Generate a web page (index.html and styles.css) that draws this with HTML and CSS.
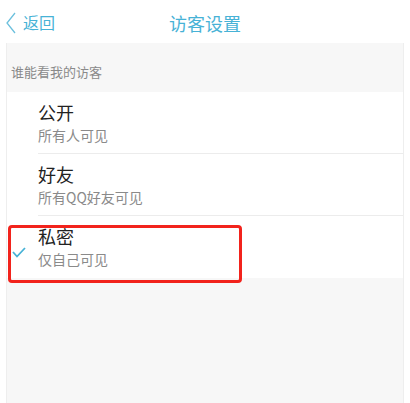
FILE: index.html
```html
<!DOCTYPE html>
<html lang="zh-CN">

<head>
    <meta charset="UTF-8">
    <meta name="viewport" content="width=device-width, initial-scale=1.0">
    <title>访客设置</title>
    <link rel="stylesheet" href="styles.css">
</head>

<body>
    <div class="header">
        <div class="back">
            <svg class="chevron" width="12" height="22" viewBox="0 0 12 22">
                <polyline points="10,1 2,11 10,21" fill="none" stroke="#6cc0dd" stroke-width="1.3" />
            </svg>
            <span>返回</span>
        </div>
        <h1 class="title">访客设置</h1>
    </div>

    <div class="page">
        <div class="section-title">谁能看我的访客</div>
        <div class="list">
            <div class="item">
                <div class="check"></div>
                <div class="text">
                    <div class="name">公开</div>
                    <div class="desc">所有人可见</div>
                </div>
            </div>
            <div class="item">
                <div class="check"></div>
                <div class="text">
                    <div class="name">好友</div>
                    <div class="desc">所有QQ好友可见</div>
                </div>
            </div>
            <div class="item last">
                <div class="check">
                    <svg width="14" height="11" viewBox="0 0 14 11">
                        <polyline points="1,5 5,9.5 13,1" fill="none" stroke="#47b2d6" stroke-width="1.8" />
                    </svg>
                </div>
                <div class="text">
                    <div class="name">私密</div>
                    <div class="desc">仅自己可见</div>
                </div>
            </div>
        </div>
        <div class="highlight"></div>
    </div>
</body>

</html>
```

FILE: styles.css
```css
* {
    margin: 0;
    padding: 0;
    box-sizing: border-box;
    font-family: "Noto Sans CJK SC", "Noto Sans", sans-serif;
}

body {
    background: white;
    width: 410px;
    height: 403px;
    overflow: hidden;
}

.header {
    height: 43px;
    display: flex;
    align-items: center;
    position: relative;
    color: #47b2d6;
}

.back {
    display: flex;
    align-items: center;
    gap: 6px;
    padding-left: 5px;
    font-size: 16px;
}

.chevron {
    margin-top: 2px;
}

.title {
    position: absolute;
    left: 0;
    right: 0;
    text-align: center;
    font-size: 18px;
    font-weight: normal;
    margin-top: 2px;
}

.page {
    position: relative;
    margin: 0 6px;
    height: 360px;
    background: #f7f7f7;
    border-left: 1px solid #eeeeee;
    border-right: 1px solid #eeeeee;
}

.section-title {
    height: 49px;
    padding: 20px 0 0 4px;
    font-size: 13px;
    line-height: 17px;
    color: #8a8a8a;
}

.list {
    background: white;
}

.item {
    height: 62px;
    display: flex;
    align-items: center;
}

.check {
    width: 31px;
    display: flex;
    padding-left: 5px;
    padding-top: 10px;
}

.text {
    flex: 1;
    height: 100%;
    padding-top: 7px;
    border-bottom: 1px solid #ececec;
}

.last .text {
    border-bottom: none;
}

.name {
    font-size: 18px;
    line-height: 26px;
    color: #222;
}

.desc {
    font-size: 14px;
    line-height: 20px;
    color: #8a8a8a;
}

.highlight {
    position: absolute;
    left: 1px;
    top: 182px;
    width: 234px;
    height: 58px;
    border: 3px solid #f2231c;
    border-radius: 4px;
}
```
